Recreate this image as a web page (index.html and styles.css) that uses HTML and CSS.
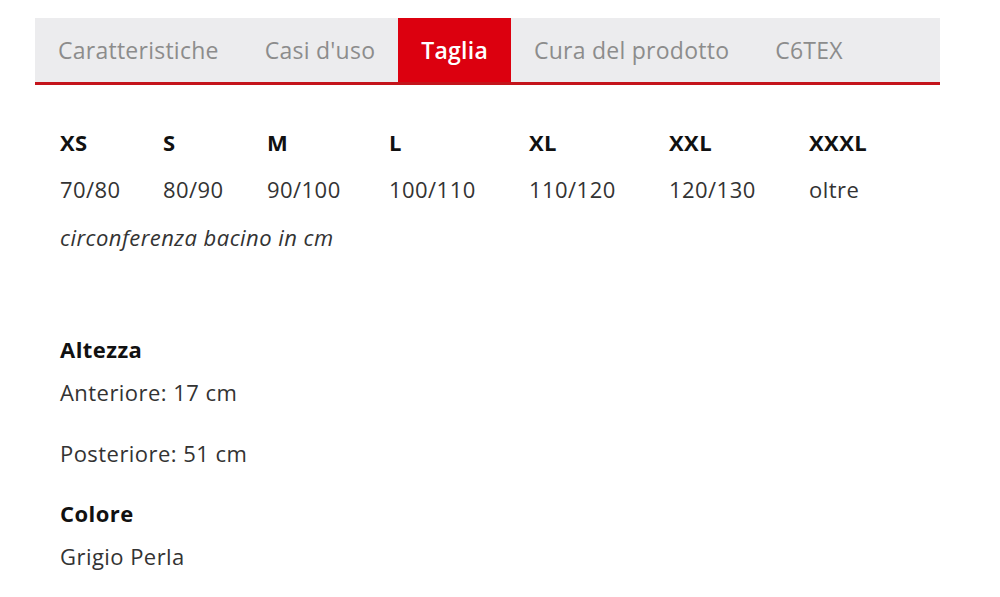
FILE: index.html
```html
<!DOCTYPE html>
<html lang="it">
<head>
    <meta charset="UTF-8">
    <title>Taglia</title>
    <link rel="stylesheet" href="styles.css">
</head>
<body>
    <div class="product-tabs">
        <ul class="tab-nav">
            <li class="tab">Caratteristiche</li>
            <li class="tab">Casi d'uso</li>
            <li class="tab active">Taglia</li>
            <li class="tab">Cura del prodotto</li>
            <li class="tab">C6TEX</li>
        </ul>

        <div class="tab-content">
            <div class="size-table">
                <div class="size-head">XS</div>
                <div class="size-head">S</div>
                <div class="size-head">M</div>
                <div class="size-head">L</div>
                <div class="size-head">XL</div>
                <div class="size-head">XXL</div>
                <div class="size-head">XXXL</div>
                <div class="size-val">70/80</div>
                <div class="size-val">80/90</div>
                <div class="size-val">90/100</div>
                <div class="size-val">100/110</div>
                <div class="size-val">110/120</div>
                <div class="size-val">120/130</div>
                <div class="size-val">oltre</div>
            </div>
            <p class="note">circonferenza bacino in cm</p>

            <h3 class="spec-title first">Altezza</h3>
            <p class="spec">Anteriore: 17 cm</p>
            <p class="spec">Posteriore: 51 cm</p>

            <h3 class="spec-title">Colore</h3>
            <p class="spec">Grigio Perla</p>
        </div>
    </div>
</body>
</html>
```

FILE: styles.css
```css
body {
    margin: 0;
    padding: 0;
    background: #fff;
    font-family: "Open Sans", "Noto Sans", sans-serif;
    color: #333;
}

.product-tabs {
    width: 905px;
    margin: 18px 0 0 35px;
}

.tab-nav {
    list-style: none;
    margin: 0;
    padding: 0;
    display: flex;
    background-color: #ececee;
    border-bottom: 3px solid #c4141b;
    height: 64px;
}

.tab {
    padding: 0 23px;
    display: flex;
    align-items: center;
    font-size: 23px;
    letter-spacing: 0.25px;
    color: #8c8c8c;
}

.tab.active {
    background-color: #dc000f;
    color: #fff;
    font-weight: 600;
}

.tab-content {
    padding: 0 25px;
    font-size: 22px;
    letter-spacing: 0.45px;
}

.size-table {
    display: grid;
    grid-template-columns: 103px 104px 122px 140px 140px 140px auto;
    margin-top: 37px;
}

.size-head {
    font-weight: 700;
    color: #111;
    height: 41px;
    line-height: 41px;
}

.size-val {
    height: 52px;
    line-height: 52px;
}

.note {
    font-style: italic;
    margin: 0;
    line-height: 44px;
}

.spec-title {
    font-size: 22px;
    font-weight: 700;
    color: #111;
    margin: 0;
    line-height: 42px;
}

.spec-title.first {
    margin-top: 69px;
}

.spec {
    margin: 0 0 17px 0;
    line-height: 44px;
}
```
